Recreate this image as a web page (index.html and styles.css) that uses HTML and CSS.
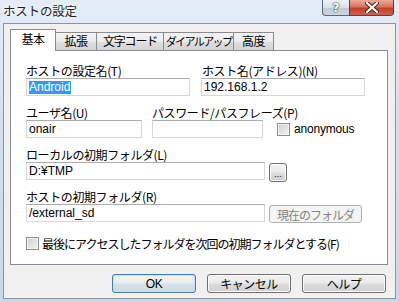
FILE: index.html
```html
<!DOCTYPE html>
<html lang="ja">
<head>
<meta charset="utf-8">
<title>ホストの設定</title>
<link rel="stylesheet" href="styles.css">
</head>
<body>
<div class="window">
  <div class="titlebar">
    <span class="title">ホストの設定</span>
    <div class="caption">
      <span class="cb help">?</span>
      <span class="cb close"><svg width="14" height="11" viewBox="0 0 14 11"><path d="M2 1 L12 10 M12 1 L2 10" stroke="#3a2020" stroke-width="4" stroke-linecap="square"/><path d="M2 1 L12 10 M12 1 L2 10" stroke="#ffffff" stroke-width="2.2" stroke-linecap="square"/></svg></span>
    </div>
  </div>
  <div class="client">
    <div class="tabs">
      <span class="tab active t1">基本</span>
      <span class="tab t2">拡張</span>
      <span class="tab t3">文字コード</span>
      <span class="tab t4">ダイアルアップ</span>
      <span class="tab t5">高度</span>
    </div>
    <div class="panel">
      <div class="row">
        <div class="field w164">
          <div class="label">ホストの設定名(T)</div>
          <div class="input"><span class="sel">Android</span></div>
        </div>
        <div class="field w164 gap11">
          <div class="label ind1">ホスト名(アドレス)(N)</div>
          <div class="input">192.168.1.2</div>
        </div>
      </div>
      <div class="row mt">
        <div class="field w116">
          <div class="label">ユーザ名(U)</div>
          <div class="input">onair</div>
        </div>
        <div class="field w111 gap10">
          <div class="label">パスワード/パスフレーズ(P)</div>
          <div class="input"></div>
        </div>
        <label class="check anon"><span class="box"></span><span class="ascii">anonymous</span></label>
      </div>
      <div class="row mt">
        <div class="field w239">
          <div class="label">ローカルの初期フォルダ(L)</div>
          <div class="input">D:¥TMP</div>
        </div>
        <span class="btn browse">...</span>
      </div>
      <div class="row mt">
        <div class="field w239">
          <div class="label">ホストの初期フォルダ(R)</div>
          <div class="input">/external_sd</div>
        </div>
        <span class="btn current">現在のフォルダ</span>
      </div>
      <label class="check last"><span class="box"></span><span class="long">最後にアクセスしたフォルダを次回の初期フォルダとする(F)</span></label>
    </div>
    <div class="buttons">
      <span class="btn dlg default">OK</span>
      <span class="btn dlg">キャンセル</span>
      <span class="btn dlg">ヘルプ</span>
    </div>
  </div>
</div>
</body>
</html>
```

FILE: styles.css
```css
html, body {
  margin: 0;
  padding: 0;
}
body {
  width: 399px;
  height: 302px;
  overflow: hidden;
}
.window {
  width: 399px;
  height: 302px;
  box-sizing: border-box;
  padding: 0 3px 3px 3px;
  display: flex;
  flex-direction: column;
  background: linear-gradient(180deg, #e4edf7 0%, #d2e0ee 40%, #c9d8e8 100%);
  font-family: "Noto Sans CJK JP", "Noto Sans", sans-serif;
  font-size: 12px;
  color: #000;
}
.titlebar {
  height: 23px;
  flex: none;
  display: flex;
  align-items: flex-start;
}
.title {
  margin-top: 3px;
  line-height: 16px;
  font-size: 12.5px;
  letter-spacing: -0.2px;
  color: #1e1e1e;
  text-shadow: 0 0 4px #fff, 0 0 6px #fff;
}
.caption {
  margin-left: auto;
  margin-right: 2px;
  display: flex;
}
.cb {
  height: 16px;
  box-sizing: border-box;
  display: flex;
  align-items: center;
  justify-content: center;
  border: 1px solid #5c6878;
  border-top: none;
}
.help {
  width: 27px;
  border-radius: 0 0 0 4px;
  border-right: none;
  background: linear-gradient(180deg, #eef2f7 0%, #d9e1ea 50%, #bfcad7 55%, #cdd7e2 100%);
  font-family: "DejaVu Sans", sans-serif;
  font-weight: bold;
  font-size: 12px;
  color: #fff;
  text-shadow: 0 0 2px #333, 0 0 1px #333;
}
.close {
  width: 45px;
  border-radius: 0 0 4px 0;
  background: linear-gradient(180deg, #e9a99c 0%, #d9735f 45%, #c2402a 55%, #d4604a 100%);
  border-color: #6d3a34;
}
.client {
  flex: 1;
  border: 1px solid #8a95a3;
  background: #f0f0f0;
  display: flex;
  flex-direction: column;
}
.tabs {
  flex: none;
  display: flex;
  align-items: flex-end;
  height: 21px;
  margin: 5px 0 0 6px;
  position: relative;
  z-index: 2;
}
.tab {
  height: 18px;
  box-sizing: border-box;
  border: 1px solid #898c95;
  border-bottom: none;
  margin-right: -1px;
  background: linear-gradient(180deg, #f3f3f3 0%, #ececec 50%, #dedede 52%, #d4d4d4 100%);
  text-align: center;
  line-height: 16px;
  font-size: 12px;
  letter-spacing: -0.5px;
  white-space: nowrap;
  overflow: hidden;
}
.tab.active {
  height: 22px;
  margin-bottom: -1px;
  background: #fff;
  line-height: 18px;
  position: relative;
  z-index: 3;
}
.t1 { width: 46px; }
.t2 { width: 42px; }
.t3 { width: 68px; letter-spacing: -1.2px; }
.t4 { width: 71px; font-size: 11px; letter-spacing: -1.6px; }
.t5 { width: 41px; }
.panel {
  flex: none;
  height: 215px;
  box-sizing: border-box;
  margin: 0 7px 0 6px;
  border: 1px solid #898c95;
  background: #fff;
  padding: 13px 0 0 15px;
  position: relative;
  z-index: 1;
}
.row {
  display: flex;
  align-items: flex-end;
}
.mt { margin-top: 10px; }
.field {
  display: flex;
  flex-direction: column;
}
.w164 { width: 164px; }
.w116 { width: 116px; }
.w111 { width: 111px; }
.w239 { width: 239px; }
.gap11 { margin-left: 11px; }
.gap10 { margin-left: 10px; }
.label {
  line-height: 14px;
  height: 14px;
  font-size: 12px;
  letter-spacing: -0.4px;
  white-space: nowrap;
}
.ind1 { padding-left: 1px; }
.input {
  height: 18px;
  box-sizing: border-box;
  border: 1px solid #d5d8dd;
  border-top-color: #abadb3;
  background: #fff;
  padding: 0 2px;
  font-family: "Liberation Sans", "DejaVu Sans", sans-serif;
  font-size: 12px;
  line-height: 16px;
  white-space: nowrap;
}
.sel {
  background: #3399ff;
  color: #fff;
  display: inline-block;
  line-height: 13px;
  padding: 0 1px 0 0;
  margin-top: 1px;
}
.check {
  display: flex;
  align-items: center;
}
.box {
  width: 13px;
  height: 13px;
  box-sizing: border-box;
  border: 1px solid #8e8f8f;
  box-shadow: inset 0 0 0 1px #f2f2f2;
  background: linear-gradient(135deg, #c9ccd1 0%, #e4e6e8 60%, #f6f6f6 100%);
  flex: none;
}
.anon {
  margin-left: 14px;
  margin-bottom: 2px;
  height: 14px;
}
.ascii {
  margin-left: 4px;
  font-family: "Liberation Sans", "DejaVu Sans", sans-serif;
  font-size: 12px;
  letter-spacing: -0.2px;
}
.last {
  margin-top: 13px;
  height: 16px;
}
.long {
  margin-left: 3px;
  letter-spacing: -1px;
  white-space: nowrap;
}
.btn {
  box-sizing: border-box;
  display: flex;
  align-items: center;
  justify-content: center;
  border: 1px solid #707070;
  border-radius: 3px;
  background: linear-gradient(180deg, #f2f2f2 0%, #ebebeb 48%, #dddddd 52%, #cfcfcf 100%);
  box-shadow: inset 0 0 0 1px #fcfcfc;
  font-size: 12px;
  white-space: nowrap;
}
.browse {
  width: 18px;
  height: 19px;
  margin-left: 4px;
  margin-bottom: -2px;
  font-family: "Liberation Sans", sans-serif;
  font-size: 9px;
  line-height: 1;
  padding-top: 3px;
}
.current {
  width: 93px;
  height: 18px;
  margin-left: 4px;
  margin-bottom: -1px;
  border-color: #adb2b5;
  background: #f4f4f4;
  box-shadow: none;
  color: #838383;
  letter-spacing: -1px;
}
.buttons {
  flex: none;
  display: flex;
  margin: 9px 0 0 108px;
  gap: 11px;
}
.dlg {
  width: 84px;
  height: 19px;
  letter-spacing: -0.5px;
}
.default {
  border-color: #3c7fb1;
  box-shadow: inset 0 0 0 1px #c4e5f6;
  background: linear-gradient(180deg, #f0f4f7 0%, #e7edf1 48%, #d8e1e7 52%, #cdd8df 100%);
  font-family: "Liberation Sans", sans-serif;
}
```
